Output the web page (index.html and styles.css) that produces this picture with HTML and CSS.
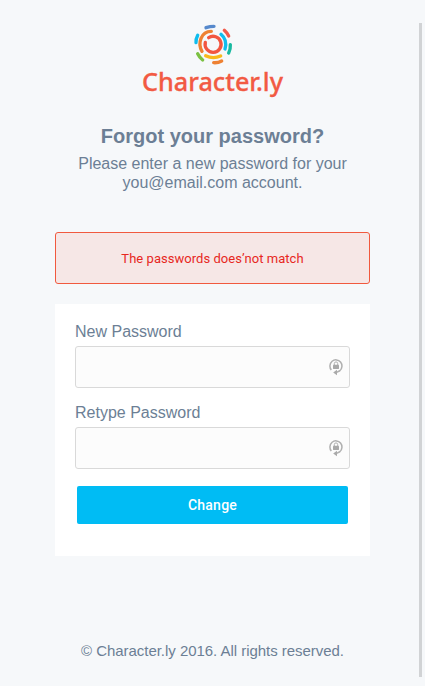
FILE: index.html
```html
<!DOCTYPE html>
<html lang="en">
<head>
<meta charset="utf-8">
<title>Character.ly</title>
<link rel="stylesheet" href="styles.css">
</head>
<body>
<main class="page">
  <header class="logo">
    <svg class="logo-art" viewBox="0 0 150 80" role="img" aria-label="Character.ly">
      <g transform="translate(50 0) scale(.33333)" fill="none" stroke-width="10" stroke-linecap="round">
        <path stroke="#f25640" d="M62 53A24 24 0 1 1 52 67"/>
        <path stroke="#ee8132" d="M70 34C39 34 28 70 42 94"/>
        <path stroke="#10bdee" d="M99 43Q119 60 111 87"/>
        <path stroke="#f8b91c" d="M53 107Q75 118 98 108"/>
        <path stroke="#5689cc" d="M54 23Q66 19 78 19"/>
        <path stroke="#f25b4b" d="M109 31Q116 37 122 48"/>
        <path stroke="#18b9a0" d="M127 74Q128 87 122 99"/>
        <path stroke="#ee8132" d="M77 128Q90 129 101 123"/>
        <path stroke="#7bc142" d="M29 101Q35 113 44 120"/>
        <path stroke="#10bdee" d="M29 46Q23 57 24 68"/>
      </g>
      <text class="wordmark" x="4" y="70.5" textLength="141" lengthAdjust="spacingAndGlyphs">Character.ly</text>
    </svg>
  </header>
  <section class="intro">
    <h1>Forgot your password?</h1>
    <p>Please enter a new password for your<br>you@email.com account.</p>
  </section>
  <div class="alert" role="alert">The passwords does’not match</div>
  <form class="card">
    <label for="new-password">New Password</label>
    <div class="field">
      <input id="new-password" type="password">
      <svg class="lock" viewBox="0 0 14 18"><use href="#lock"/></svg>
    </div>
    <label for="retype-password">Retype Password</label>
    <div class="field">
      <input id="retype-password" type="password">
      <svg class="lock" viewBox="0 0 14 18"><use href="#lock"/></svg>
    </div>
    <button type="button">Change</button>
  </form>
  <footer>© Character.ly 2016. All rights reserved.</footer>
</main>
<div class="scroll-thumb"></div>
<svg class="symbols" aria-hidden="true">
  <symbol id="lock" viewBox="0 0 14 18">
    <path d="M2.3 12A6 6.2 0 1 1 10.8 12.8L7 14.6" fill="none" stroke="#b0b0b0" stroke-width="1.5"/>
    <path d="M8 11.8V17.2L4.2 14.5Z" fill="#aaa"/>
    <path d="M5.3 7V5.6a1.7 1.7 0 0 1 3.4 0V7" fill="none" stroke="#b0b0b0"/>
    <rect x="4" y="6.8" width="6" height="4.2" rx=".4" fill="#a8a8a8"/>
  </symbol>
</svg>
</body>
</html>
```

FILE: styles.css
```css
* { box-sizing: border-box; }

body {
  margin: 0;
  height: 686px;
  overflow: hidden;
  background: #f6f8fa;
  color: #6c7f95;
  font: 16px/19px "Liberation Sans", Arial, sans-serif;
}

.page {
  width: 315px;
  margin-left: 55px;
  padding-top: 20px;
  display: flex;
  flex-direction: column;
}

.logo { height: 104px; padding-left: 83px; }
.logo-art { display: block; width: 150px; height: 80px; }
.wordmark {
  font: 500 25px "Noto Sans", "Open Sans", sans-serif;
  fill: #f25a43;
  stroke: #f25a43;
  stroke-width: .3px;
}

.intro { height: 108px; text-align: center; }
h1 { margin: 0 0 6px; font-size: 20px; line-height: 24px; }
.intro p { margin: 0; }

.alert {
  height: 52px;
  display: flex;
  align-items: center;
  justify-content: center;
  padding-top: 1px;
  border: 1px solid #f1593e;
  border-radius: 3px;
  background: #f6e7e6;
  color: #e7281e;
  font: 13px/18px Roboto, sans-serif;
  letter-spacing: .04px;
}

.card {
  height: 252px;
  margin-top: 20px;
  padding: 18px 20px;
  background: #fff;
}
.card label { display: block; height: 24px; }
.field { position: relative; height: 42px; margin-bottom: 15px; }
.field input {
  display: block;
  width: 100%;
  height: 42px;
  border: 1px solid #d9d9d9;
  border-radius: 3px;
  background: #fcfcfc;
}
.lock { position: absolute; top: 12px; right: 7px; width: 14px; height: 18px; }

button {
  display: block;
  width: 271px;
  height: 38px;
  margin: 17px auto 0;
  padding: 0;
  border: 0;
  border-radius: 2px;
  background: #00bcf4;
  color: #fff;
  font: 500 14px Roboto, sans-serif;
  letter-spacing: .25px;
}

footer {
  margin-top: 85px;
  text-align: center;
  font-size: 15px;
  letter-spacing: -.04px;
}

.scroll-thumb {
  position: absolute;
  top: 23px;
  left: 419px;
  width: 3px;
  height: 654px;
  background: #d1d3d5;
}

.symbols { position: absolute; width: 0; height: 0; }
```
